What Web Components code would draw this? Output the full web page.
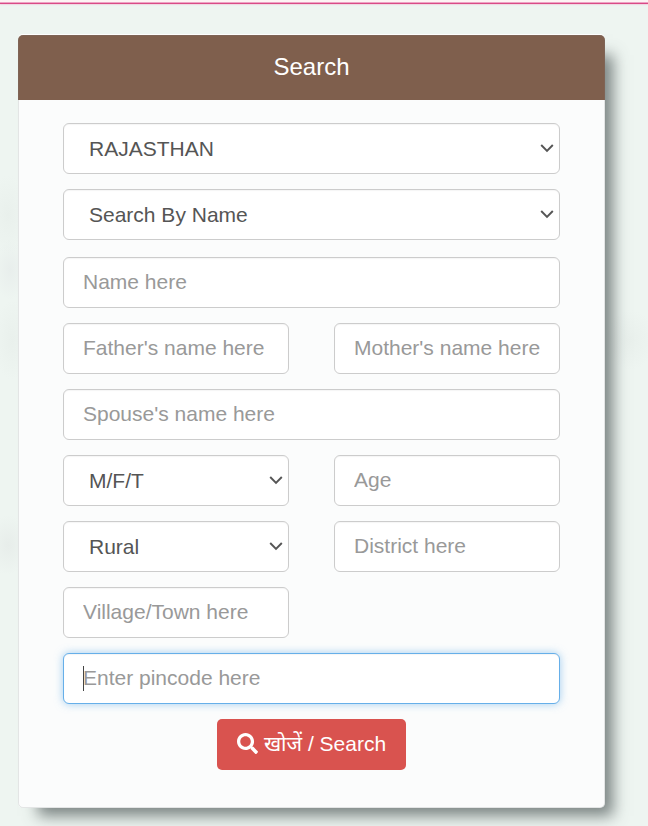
<!DOCTYPE html>
<html lang="en">
<head>
<meta charset="utf-8">
<title>Search</title>
<style>
  html, body { margin: 0; height: 100%; }
  body {
    background:
      radial-gradient(ellipse 20px 40px at 8px 215px, #e9f0ec, transparent),
      radial-gradient(ellipse 16px 30px at 10px 270px, #e8eeec, transparent),
      radial-gradient(ellipse 18px 40px at 12px 340px, #e9f0ec, transparent),
      radial-gradient(ellipse 20px 30px at 8px 545px, #e7edea, transparent),
      radial-gradient(ellipse 26px 30px at 630px 340px, #e9f0ec, transparent),
      #eef5f1;
    font-family: "Liberation Sans", Arial, sans-serif;
    overflow: hidden;
  }
</style>
</head>
<body>
<top-line></top-line>
<search-card heading="Search">
  <form-select wide value="RAJASTHAN"></form-select>
  <form-select wide value="Search By Name" style="margin-bottom: 2px"></form-select>
  <form-input wide placeholder="Name here"></form-input>
  <form-input placeholder="Father's name here"></form-input>
  <form-input placeholder="Mother's name here"></form-input>
  <form-input wide placeholder="Spouse's name here"></form-input>
  <form-select value="M/F/T"></form-select>
  <form-input placeholder="Age"></form-input>
  <form-select value="Rural"></form-select>
  <form-input placeholder="District here"></form-input>
  <form-input placeholder="Village/Town here" style="grid-column: 1"></form-input>
  <form-input wide focused placeholder="Enter pincode here"></form-input>
  <search-button>खोजें / Search</search-button>
</search-card>

<script>
// Pink rule at the top of the page
class TopLine extends HTMLElement {
  constructor() {
    super();
    this.attachShadow({ mode: 'open' });
    this.shadowRoot.innerHTML = `
      <style>
        :host {
          display: block;
          height: 4px;
          box-sizing: border-box;
          background: linear-gradient(#fdf3f4 0 2px, #eda3c4 2px 3px, #d94a86 3px);
          box-shadow: 0 1px 1px rgba(240, 170, 200, .4);
        }
      </style>`;
  }
}
customElements.define('top-line', TopLine);

// Card with brown header
const cardTemplate = document.createElement('template');
cardTemplate.innerHTML = `
<style>
  :host {
    display: block;
    width: 587px;
    height: 773px;
    box-sizing: border-box;
    margin: 31px 0 0 18px;
    background: #fbfcfc;
    border-radius: 5px;
    outline: 1px solid rgba(120, 130, 125, .18);
    outline-offset: -1px;
    box-shadow: 14px 14px 14px -6px rgba(70, 80, 80, .68), 0 -1px 0 #fff;
  }
  .head {
    height: 65px;
    padding-bottom: 2px;
    box-sizing: border-box;
    display: flex;
    align-items: center;
    justify-content: center;
    background: #7f5f4d;
    color: #fff;
    font-size: 24px;
    border-radius: 5px 5px 0 0;
  }
  .body {
    display: grid;
    grid-template-columns: 226px 226px;
    column-gap: 45px;
    row-gap: 15px;
    padding: 23px 45px 0;
  }
</style>
<div class="head"></div>
<div class="body"><slot></slot></div>
`;

class SearchCard extends HTMLElement {
  constructor() {
    super();
    this.attachShadow({ mode: 'open' });
    this.shadowRoot.appendChild(cardTemplate.content.cloneNode(true));
  }

  connectedCallback() {
    this.shadowRoot.querySelector('.head').textContent = this.getAttribute('heading');
  }
}
customElements.define('search-card', SearchCard);

// Text input
const inputTemplate = document.createElement('template');
inputTemplate.innerHTML = `
<style>
  :host { display: block; position: relative; height: 51px; }
  :host([wide]) { grid-column: 1 / -1; }
  input {
    display: block;
    width: 100%;
    height: 100%;
    box-sizing: border-box;
    padding: 0 19px 2px;
    border: 1px solid #ccc;
    border-radius: 6px;
    background: #fff;
    color: #555;
    font: 21px "Liberation Sans", Arial, sans-serif;
    outline: none;
    box-shadow: inset 0 1px 1px rgba(0, 0, 0, .04);
  }
  input::placeholder { color: #999; opacity: 1; }
  :host([focused]) input {
    border-color: #66afe9;
    box-shadow: inset 0 1px 1px rgba(0, 0, 0, .04), 0 0 8px rgba(102, 175, 233, .6);
  }
  .caret { display: none; position: absolute; left: 20px; top: 13px; width: 1px; height: 25px; background: #444; }
  :host([focused]) .caret { display: block; }
</style>
<input type="text">
<span class="caret"></span>
`;

class FormInput extends HTMLElement {
  constructor() {
    super();
    this.attachShadow({ mode: 'open' });
    this.shadowRoot.appendChild(inputTemplate.content.cloneNode(true));
  }

  connectedCallback() {
    this.shadowRoot.querySelector('input').placeholder = this.getAttribute('placeholder') || '';
  }
}
customElements.define('form-input', FormInput);

// Select with a chevron drawn over it
const selectTemplate = document.createElement('template');
selectTemplate.innerHTML = `
<style>
  :host { display: block; position: relative; height: 51px; }
  :host([wide]) { grid-column: 1 / -1; }
  select {
    display: block;
    width: 100%;
    height: 100%;
    box-sizing: border-box;
    padding: 0 30px 0 25px;
    border: 1px solid #ccc;
    border-radius: 6px;
    background: #fff;
    color: #555;
    font: 21px "Liberation Sans", Arial, sans-serif;
    outline: none;
    appearance: none;
    box-shadow: inset 0 1px 1px rgba(0, 0, 0, .04);
  }
  svg { position: absolute; right: 6px; top: 20px; width: 14px; height: 10px; pointer-events: none; }
</style>
<select></select>
<svg viewBox="0 0 14 10"><path d="M1.2 2 L7 8 L12.8 2" fill="none" stroke="#555" stroke-width="1.9"/></svg>
`;

class FormSelect extends HTMLElement {
  constructor() {
    super();
    this.attachShadow({ mode: 'open' });
    this.shadowRoot.appendChild(selectTemplate.content.cloneNode(true));
  }

  connectedCallback() {
    const option = document.createElement('option');
    option.textContent = this.getAttribute('value');
    this.shadowRoot.querySelector('select').appendChild(option);
  }
}
customElements.define('form-select', FormSelect);

// Red search button
const buttonTemplate = document.createElement('template');
buttonTemplate.innerHTML = `
<style>
  :host { display: flex; grid-column: 1 / -1; justify-content: center; }
  button {
    display: flex;
    align-items: center;
    justify-content: center;
    gap: 6px;
    width: 189px;
    height: 51px;
    padding: 0;
    border: 0;
    border-radius: 5px;
    background: #d9534f;
    color: #fff;
    font: 21px "Liberation Sans", "Noto Sans", "DejaVu Sans", sans-serif;
  }
  svg { width: 21px; height: 21px; fill: #fff; flex: none; margin-bottom: 2px; }
  span { padding-bottom: 4px; }
</style>
<button type="button">
  <svg viewBox="0 0 512 512"><path d="M505 442.7L405.3 343c-4.5-4.5-10.6-7-17-7H372c27.6-35.3 44-79.7 44-128C416 93.1 322.9 0 208 0S0 93.1 0 208s93.1 208 208 208c48.3 0 92.7-16.4 128-44v16.3c0 6.4 2.5 12.5 7 17l99.7 99.7c9.4 9.4 24.6 9.4 33.9 0l28.3-28.3c9.4-9.4 9.4-24.6.1-34zM208 336c-70.7 0-128-57.2-128-128 0-70.7 57.2-128 128-128 70.7 0 128 57.2 128 128 0 70.7-57.2 128-128 128z"/></svg>
  <span><slot></slot></span>
</button>
`;

class SearchButton extends HTMLElement {
  constructor() {
    super();
    this.attachShadow({ mode: 'open' });
    this.shadowRoot.appendChild(buttonTemplate.content.cloneNode(true));
  }
}
customElements.define('search-button', SearchButton);
</script>
</body>
</html>
